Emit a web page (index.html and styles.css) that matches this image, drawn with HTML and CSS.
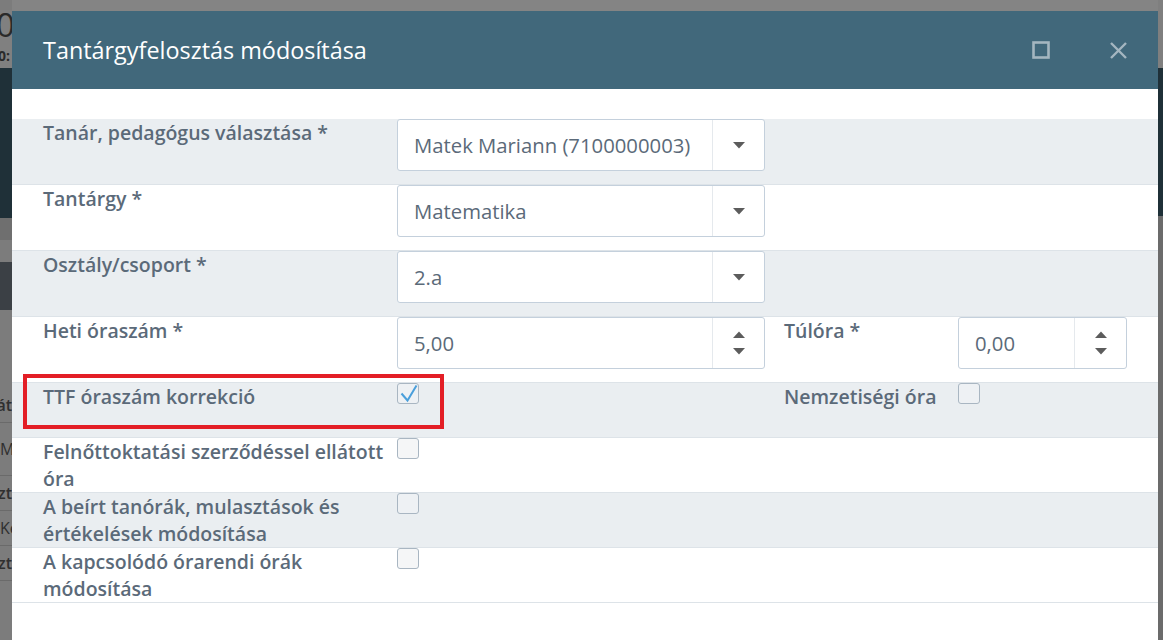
FILE: index.html
```html
<!DOCTYPE html>
<html lang="hu">
<head>
    <meta charset="UTF-8" />
    <meta name="viewport" content="width=device-width, initial-scale=1" />
    <title>Tantárgyfelosztás módosítása</title>
    <link rel="stylesheet" href="styles.css">
</head>
<body>
    <!-- Háttérben lévő oldal (letakarva) -->
    <div class="hatter-bal">
        <div class="hb-fej">
            <span class="hb-nagy">0</span>
            <span class="hb-kicsi">0:</span>
        </div>
        <div class="hb-sotet"></div>
        <div class="hb-csik"></div>
        <div class="hb-sav"></div>
        <div class="hb-lista">
            <div class="hb-elem"><span>Osztály/csoport megnevezése lát</span></div>
            <div class="hb-elem"><span>M</span></div>
            <div class="hb-elem"><span>Óraszám összesen szt</span></div>
            <div class="hb-elem"><span>Ké</span></div>
            <div class="hb-elem"><span>Túlóra összesen zt</span></div>
        </div>
    </div>

    <div class="modal">
        <div class="modal-fej">
            <h2 class="modal-cim">Tantárgyfelosztás módosítása</h2>
            <div class="fej-gombok">
                <svg class="fej-ikon" width="18" height="18" viewBox="0 0 18 18" aria-hidden="true">
                    <rect x="1.5" y="1.5" width="15" height="15" fill="none" stroke="currentColor" stroke-width="2.6" />
                </svg>
                <svg class="fej-ikon" width="19" height="19" viewBox="0 0 19 19" aria-hidden="true">
                    <path d="M2 2 L17 17 M17 2 L2 17" fill="none" stroke="currentColor" stroke-width="2.4" />
                </svg>
            </div>
        </div>

        <div class="modal-test">
            <div class="sor szurke">
                <label class="cimke">Tanár, pedagógus választása *</label>
                <div class="mezo">
                    <span class="mezo-szoveg">Matek Mariann (7100000003)</span>
                    <span class="mezo-gomb">
                        <svg width="14" height="7" viewBox="0 0 14 7"><polygon points="1,0 13,0 7,6.5" fill="#5c5c5c" /></svg>
                    </span>
                </div>
            </div>

            <div class="sor">
                <label class="cimke">Tantárgy *</label>
                <div class="mezo">
                    <span class="mezo-szoveg">Matematika</span>
                    <span class="mezo-gomb">
                        <svg width="14" height="7" viewBox="0 0 14 7"><polygon points="1,0 13,0 7,6.5" fill="#5c5c5c" /></svg>
                    </span>
                </div>
            </div>

            <div class="sor szurke">
                <label class="cimke">Osztály/csoport *</label>
                <div class="mezo">
                    <span class="mezo-szoveg">2.a</span>
                    <span class="mezo-gomb">
                        <svg width="14" height="7" viewBox="0 0 14 7"><polygon points="1,0 13,0 7,6.5" fill="#5c5c5c" /></svg>
                    </span>
                </div>
            </div>

            <div class="sor">
                <label class="cimke">Heti óraszám *</label>
                <div class="mezo">
                    <span class="mezo-szoveg">5,00</span>
                    <span class="mezo-gomb leptet">
                        <svg width="14" height="7" viewBox="0 0 14 7"><polygon points="7,0.5 13,7 1,7" fill="#5c5c5c" /></svg>
                        <svg width="14" height="7" viewBox="0 0 14 7"><polygon points="1,0 13,0 7,6.5" fill="#5c5c5c" /></svg>
                    </span>
                </div>
                <label class="cimke masodik">Túlóra *</label>
                <div class="mezo">
                    <span class="mezo-szoveg">0,00</span>
                    <span class="mezo-gomb leptet">
                        <svg width="14" height="7" viewBox="0 0 14 7"><polygon points="7,0.5 13,7 1,7" fill="#5c5c5c" /></svg>
                        <svg width="14" height="7" viewBox="0 0 14 7"><polygon points="1,0 13,0 7,6.5" fill="#5c5c5c" /></svg>
                    </span>
                </div>
            </div>

            <div class="sor szurke jelolo-sor">
                <label class="cimke">TTF óraszám korrekció</label>
                <div class="jelolo-cella">
                    <span class="jelolo">
                        <svg width="22" height="21" viewBox="0 0 22 21"><path d="M4.5 10.5 L10.5 17.5 L19.5 2.5" fill="none" stroke="#4a9fdb" stroke-width="2" /></svg>
                    </span>
                </div>
                <label class="cimke masodik">Nemzetiségi óra</label>
                <div class="jelolo-cella"><span class="jelolo"></span></div>
                <!-- kiemelő keret -->
                <div class="kiemeles"></div>
            </div>

            <div class="sor jelolo-sor">
                <label class="cimke">Felnőttoktatási szerződéssel ellátott óra</label>
                <div class="jelolo-cella"><span class="jelolo"></span></div>
            </div>

            <div class="sor szurke jelolo-sor">
                <label class="cimke">A beírt tanórák, mulasztások és értékelések módosítása</label>
                <div class="jelolo-cella"><span class="jelolo"></span></div>
            </div>

            <div class="sor jelolo-sor">
                <label class="cimke">A kapcsolódó órarendi órák módosítása</label>
                <div class="jelolo-cella"><span class="jelolo"></span></div>
            </div>
        </div>
    </div>

    <div class="hatter-jobb">
        <div class="hj-fent"></div>
        <div class="hj-sotet"></div>
        <div class="hj-lent"></div>
    </div>
</body>
</html>
```

FILE: styles.css
```css
body {
    margin: 0;
    padding: 0;
    height: 100vh;
    overflow: hidden;
    display: flex;
    background-color: #848484;
    font-family: 'Open Sans', 'Liberation Sans', sans-serif;
}

/* Letakart háttér oldal, bal szél */
.hatter-bal {
    width: 12px;
    flex: none;
    display: flex;
    flex-direction: column;
    overflow: hidden;
    background-color: #7c7c7c;
}
.hb-fej {
    height: 58px;
    margin-top: 10px;
    background-color: #808080;
    color: #2a2a2a;
    display: flex;
    flex-direction: column;
    white-space: nowrap;
}
.hb-nagy {
    font-size: 33px;
    line-height: 30px;
    margin-left: -4px;
}
.hb-kicsi {
    font-size: 14px;
    font-weight: 700;
    line-height: 20px;
    margin-left: -2px;
    margin-top: 6px;
}
.hb-sotet {
    height: 150px;
    background-color: #1f3038;
}
.hb-csik {
    height: 22px;
    background-color: #6f6f6f;
}
.hb-sav {
    height: 48px;
    margin-top: 22px;
    background-color: #3b4045;
}
.hb-lista {
    padding-top: 78px;
}
.hb-elem {
    height: 34px;
    border-bottom: 1px solid #6a6a6a;
    display: flex;
    justify-content: flex-end;
    align-items: center;
    white-space: nowrap;
    color: #2f2f2f;
    font-size: 16px;
    font-weight: 600;
}
.hb-elem:nth-child(2) {
    height: 52px;
    justify-content: flex-start;
    font-weight: 400;
}
.hb-elem:nth-child(4) {
    font-weight: 400;
    justify-content: flex-start;
}

/* Letakart háttér oldal, jobb szél */
.hatter-jobb {
    flex: 1;
    display: flex;
    flex-direction: column;
}
.hj-fent {
    height: 68px;
    background-color: #7f7f7f;
}
.hj-sotet {
    height: 148px;
    background-color: #1f3038;
}
.hj-lent {
    flex: 1;
    background-color: #6b6b6b;
}

/* Modal ablak */
.modal {
    width: 1146px;
    flex: none;
    margin-top: 11px;
    background-color: #fff;
    display: flex;
    flex-direction: column;
}
.modal-fej {
    height: 78px;
    flex: none;
    background-color: #41687b;
    display: flex;
    align-items: center;
    justify-content: space-between;
    padding: 0 30px 0 31px;
}
.modal-cim {
    margin: 0;
    font-size: 23.4px;
    font-weight: 400;
    color: #fff;
}
.fej-gombok {
    display: flex;
    align-items: center;
    gap: 59px;
    color: #a4b6c0;
}
.fej-ikon {
    display: block;
}
.modal-test {
    padding-top: 30px;
}

/* Űrlap sorok */
.sor {
    position: relative;
    display: grid;
    grid-template-columns: 354px 368px 193px 169px;
    padding: 0 31px 13px;
    border-bottom: 1px solid #dde3e8;
}
.sor.szurke {
    background-color: #eaeef1;
}
.cimke {
    font-size: 19.5px;
    font-weight: 600;
    line-height: 27px;
    color: #5b6a79;
    padding-right: 8px;
}
.cimke.masodik {
    padding-left: 19px;
}
.mezo {
    height: 52px;
    box-sizing: border-box;
    border: 1px solid #c4d0dc;
    border-radius: 3px;
    background-color: #fff;
    display: flex;
}
.mezo-szoveg {
    flex: 1;
    padding-left: 16px;
    font-size: 20.3px;
    line-height: 50px;
    color: #5b6a79;
    white-space: nowrap;
}
.mezo-gomb {
    width: 51px;
    flex: none;
    border-left: 1px solid #e5e9ed;
    display: flex;
    justify-content: center;
    align-items: center;
}
.mezo-gomb svg {
    display: block;
}
.mezo-gomb.leptet {
    flex-direction: column;
    gap: 10px;
}

/* Jelölőnégyzetek */
.jelolo-sor {
    padding-bottom: 0;
    min-height: 54px;
}
.jelolo {
    display: block;
    width: 22px;
    height: 21px;
    box-sizing: border-box;
    border: 1.5px solid #a9b6c2;
    border-radius: 3px;
    background-color: #f5f6f7;
    position: relative;
}
.jelolo svg {
    position: absolute;
    left: -1.5px;
    top: -1.5px;
}
.sor.szurke .jelolo {
    background-color: #eef1f4;
}

/* Piros kiemelés */
.kiemeles {
    position: absolute;
    left: 11px;
    top: -9px;
    width: 421px;
    height: 55px;
    box-sizing: border-box;
    border: 4px solid #e31e26;
    pointer-events: none;
}
```
